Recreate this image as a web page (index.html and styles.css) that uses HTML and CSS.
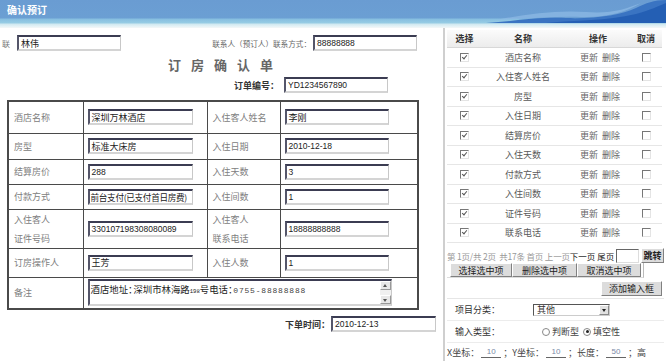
FILE: index.html
```html
<!DOCTYPE html>
<html lang="zh-CN">
<head>
<meta charset="utf-8">
<title>确认预订</title>
<link rel="stylesheet" href="styles.css">
</head>
<body>
<header class="topbar">
  <span class="topbar-title">确认预订</span>
  <svg class="waves" viewBox="0 0 180 23" preserveAspectRatio="none">
    <path d="M0 23 C30 21 50 17 80 18 C110 19 135 15 150 8 C160 3 168 0 180 0 L180 23 Z" fill="#3a74c2"/>
    <path d="M10 20 C40 14 70 10 100 12 C125 14 140 9 155 3 C140 12 120 18 95 17 C70 16 40 19 10 20 Z" fill="#8fbbe6" opacity="0.7"/>
    <path d="M60 23 C90 20 120 21 150 14 C165 10 172 6 180 3 L180 23 Z" fill="#245fb4"/>
  </svg>
</header>
<div class="main">
  <section class="form">
    <div class="contact">
      <span class="cut-lbl">联</span>
      <span class="field w104">林伟</span>
      <span class="contact-lbl">联系人（预订人）联系方式：</span>
      <span class="field w104 num">88888888</span>
    </div>
    <h1 class="doc-title">订房确认单</h1>
    <div class="orderno">
      <span class="blbl">订单编号：</span>
      <span class="field w104 num">YD1234567890</span>
    </div>
    <table class="grid">
      <colgroup><col class="c1"><col class="c2"><col class="c3"><col class="c4"></colgroup>
      <tr class="r1"><td class="lbl">酒店名称</td><td><span class="field w105">深圳万林酒店</span></td><td class="lbl">入住客人姓名</td><td><span class="field w104">李刚</span></td></tr>
      <tr class="r2"><td class="lbl">房型</td><td><span class="field w105">标准大床房</span></td><td class="lbl">入住日期</td><td><span class="field w104 num">2010-12-18</span></td></tr>
      <tr class="r3"><td class="lbl">结算房价</td><td><span class="field w105 num">288</span></td><td class="lbl">入住天数</td><td><span class="field w104 num">3</span></td></tr>
      <tr class="r4"><td class="lbl">付款方式</td><td><span class="field w105 tight">前台支付(已支付首日房费)</span></td><td class="lbl">入住间数</td><td><span class="field w104 num">1</span></td></tr>
      <tr class="r5"><td class="lbl two">入住客人<br>证件号码</td><td><span class="field w105 num">330107198308080089</span></td><td class="lbl two">入住客人<br>联系电话</td><td><span class="field w104 num">18888888888</span></td></tr>
      <tr class="r6"><td class="lbl">订房操作人</td><td><span class="field w105">王芳</span></td><td class="lbl">入住人数</td><td><span class="field w104 num">1</span></td></tr>
      <tr class="r7"><td class="lbl">备注</td><td colspan="3">
        <div class="memo">
          <span class="memo-text">酒店地址<span class="colon">：</span>深圳市林海路<span class="sm">198</span>号电话<span class="colon">：</span><span class="wd">0755-88888888</span></span>
          <span class="memo-bar"><span class="arr up"></span><span class="arr down"></span></span>
        </div>
      </td></tr>
    </table>
    <div class="ordertime">
      <span class="blbl">下单时间：</span>
      <span class="field w105 num">2010-12-13</span>
    </div>
  </section>
  <aside class="panel">
    <div class="ptable">
      <div class="prow phead"><span>选择</span><span>名称</span><span>操作</span><span>取消</span></div>
      <div class="prow"><span><i class="cb on"></i></span><span>酒店名称</span><span class="ops">更新 删除</span><span><i class="cb"></i></span></div>
      <div class="prow"><span><i class="cb on"></i></span><span>入住客人姓名</span><span class="ops">更新 删除</span><span><i class="cb"></i></span></div>
      <div class="prow"><span><i class="cb on"></i></span><span>房型</span><span class="ops">更新 删除</span><span><i class="cb"></i></span></div>
      <div class="prow"><span><i class="cb on"></i></span><span>入住日期</span><span class="ops">更新 删除</span><span><i class="cb"></i></span></div>
      <div class="prow"><span><i class="cb on"></i></span><span>结算房价</span><span class="ops">更新 删除</span><span><i class="cb"></i></span></div>
      <div class="prow"><span><i class="cb on"></i></span><span>入住天数</span><span class="ops">更新 删除</span><span><i class="cb"></i></span></div>
      <div class="prow"><span><i class="cb on"></i></span><span>付款方式</span><span class="ops">更新 删除</span><span><i class="cb"></i></span></div>
      <div class="prow"><span><i class="cb on"></i></span><span>入住间数</span><span class="ops">更新 删除</span><span><i class="cb"></i></span></div>
      <div class="prow"><span><i class="cb on"></i></span><span>证件号码</span><span class="ops">更新 删除</span><span><i class="cb"></i></span></div>
      <div class="prow"><span><i class="cb on"></i></span><span>联系电话</span><span class="ops">更新 删除</span><span><i class="cb"></i></span></div>
    </div>
    <div class="pager">
      <span class="pg-info">第 1页/共 2页 &nbsp;共17条 首页 上一页</span><span class="pg-link">下一页 尾页</span>
      <span class="pg-input"></span>
      <span class="btn pg-go">跳转</span>
    </div>
    <div class="btnrow">
      <span class="btn b1">选择选中项</span><span class="btn b2">删除选中项</span><span class="btn b3">取消选中项</span>
    </div>
    <div class="addrow"><span class="btn add">添加输入框</span></div>
    <div class="opt">
      <span class="opt-lbl">项目分类：</span>
      <span class="select"><span class="sel-text">其他</span><span class="sel-arrow"></span></span>
    </div>
    <div class="opt">
      <span class="opt-lbl">输入类型：</span>
      <span class="radios"><i class="rd"></i><span>判断型</span><i class="rd on"></i><span>填空性</span></span>
    </div>
    <div class="coords">
      <span>X坐标：</span><span class="uline">10</span><span>；Y坐标：</span><span class="uline">10</span><span>；长度：</span><span class="uline">50</span><span>；高</span>
    </div>
  </aside>
</div>
</body>
</html>
```
FILE: styles.css
```css
* { box-sizing: border-box; margin: 0; padding: 0; }
body {
  width: 666px; height: 361px; overflow: hidden; background: #fff;
  font-family: "Noto Sans CJK SC", "Liberation Sans", sans-serif;
  font-size: 9px; color: #333;
}
.topbar {
  height: 28px; display: flex; align-items: flex-start;
  background: linear-gradient(to bottom, #6a9cd2 0, #6b9fd3 18px, #86bee0 19px, #97cce4 23px, #cfe8f0 24px, #eaf5f8 27px, #f6f6f6 28px);
}
.topbar-title { color: #fff; font-weight: bold; font-size: 10px; line-height: 12px; padding: 4px 0 0 7px; }
.waves { margin-left: auto; width: 180px; height: 23px; display: block; }
.main { display: flex; height: 333px; }
.form { width: 445px; border-right: 2px solid #cfcfcf; padding-top: 7px; }
.field {
  display: inline-flex; align-items: center; height: 16px; background: #fff;
  border-top: 2px solid #3b3c52; border-left: 2px solid #55566a;
  border-right: 1px solid #c8c8c8; border-bottom: 2px solid #d4d4d4;
  padding-left: 2px; font-size: 9px; color: #222; white-space: nowrap; overflow: hidden;
}
.field.num { font-family: "Liberation Sans", sans-serif; font-size: 8.5px; }
.field.tight { font-size: 8.6px; letter-spacing: -0.3px; padding-left: 1px; }
.w104 { width: 104px; }
.w105 { width: 105px; }
.contact { display: flex; align-items: center; padding: 0 26px 0 2px; height: 16px; }
.cut-lbl { width: 15px; color: #777; font-size: 8px; }
.contact-lbl { margin-left: auto; margin-right: 2px; color: #666; font-size: 7.6px; }
.doc-title {
  margin-top: 6px; text-align: center; font-size: 13px; line-height: 16px;
  letter-spacing: 10px; padding-left: 8px; color: #666; font-weight: bold;
}
.orderno { display: flex; align-items: center; margin-top: 4px; padding-left: 234px; height: 16px; }
.blbl { font-weight: bold; color: #333; width: 50px; }
.grid {
  margin: 7px 0 0 7px; width: 410px; border-collapse: collapse; table-layout: fixed;
  border: 2px solid #4a4a4a;
}
.grid td { border: 1px solid #4a4a4a; padding: 0 0 0 4px; vertical-align: middle; }
.grid td.lbl { color: #808080; padding-left: 5px; }
.grid td.two { line-height: 19px; }
.c1 { width: 75px; } .c2 { width: 124px; } .c3 { width: 73px; } .c4 { width: 138px; }
.r1 { height: 32px; } .r2 { height: 26px; } .r3 { height: 25px; } .r4 { height: 25px; }
.r5 { height: 31px; } .r6 { height: 29px; } .r7 { height: 32px; }
.memo {
  width: 304px; height: 27px; display: flex; background: #fff;
  border-top: 2px solid #3b3c52; border-left: 2px solid #55566a;
  border-right: 1px solid #c8c8c8; border-bottom: 2px solid #d4d4d4;
}
.memo-text { flex: 1; padding: 1px 0 0 1px; font-size: 9.4px; color: #222; white-space: nowrap; overflow: hidden; }
.memo-text .colon { letter-spacing: -5px; margin-right: 1px; }
.memo-text .sm { font-family: "Liberation Mono", monospace; font-size: 5.6px; }
.memo-text .wd { font-family: "Liberation Mono", monospace; font-size: 8px; letter-spacing: 0.8px; color: #444; }
.memo-bar { width: 11px; display: flex; flex-direction: column; justify-content: space-between; background: #f0f0f0; }
.arr { height: 9px; background: #e8e8e8; border: 1px solid; border-color: #fff #999 #999 #fff; position: relative; }
.arr::after { content: ""; position: absolute; left: 2px; border-left: 2px solid transparent; border-right: 2px solid transparent; }
.arr.up::after { top: 2px; border-bottom: 3px solid #555; }
.arr.down::after { top: 3px; border-top: 3px solid #555; }
.ordertime { display: flex; align-items: center; justify-content: flex-end; margin-top: 6px; padding-right: 7px; height: 16px; }
.ordertime .blbl { width: auto; margin-right: 1px; }

.panel { width: 219px; padding: 2px 0 0 2px; }
.ptable { width: 215px; }
.prow { display: grid; grid-template-columns: 35px 82px 68px 28px; height: 19.5px; align-items: center; text-align: center; border-bottom: 1px solid #e6e6e6; color: #5a5a5a; }
.prow > span { display: flex; justify-content: center; align-items: center; }
.phead { height: 18px; font-weight: bold; color: #333; background: linear-gradient(#fbfbfb, #ececec); border-bottom: 1px solid #d8d8d8; }
.ops { color: #666; word-spacing: 2px; padding-left: 4px; }
.cb { display: inline-block; width: 9px; height: 9px; background: #fff; border-top: 1px solid #777; border-left: 1px solid #777; border-right: 1px solid #e4e4e4; border-bottom: 1px solid #e4e4e4; position: relative; }
.cb.on::after { content: ""; position: absolute; left: 2px; top: 0px; width: 2px; height: 4px; border-right: 1.5px solid #555; border-bottom: 1.5px solid #555; transform: rotate(40deg); }
.pager { display: flex; align-items: center; height: 15px; margin-top: 5px; font-size: 8.5px; color: #999; white-space: nowrap; }
.pg-info { letter-spacing: -0.2px; }
.pg-link { color: #222; }
.pg-input { width: 23px; height: 14px; margin-left: 2px; border: 1px solid; border-color: #666 #ddd #ddd #666; background: #fff; }
.btn { display: inline-flex; align-items: center; justify-content: center; background: #dcdcdc; border: 1px solid; border-color: #fff #808080 #808080 #fff; color: #222; font-size: 9px; height: 14px; white-space: nowrap; }
.pg-go { width: 23px; height: 15px; margin-left: 2px; font-weight: bold; }
.btnrow { display: flex; height: 15px; width: 197px; border-right: 1px solid #bbb; border-bottom: 1px solid #ddd; }
.b1 { width: 62px; margin-left: 3px; } .b2 { width: 65px; } .b3 { width: 64px; }
.addrow { display: flex; justify-content: flex-end; padding: 3px 2px 0 0; height: 21px; border-bottom: 1px solid #e6e6e6; }
.add { width: 61px; height: 15px; }
.opt { display: flex; align-items: center; height: 22px; border-bottom: 1px solid #ececec; }
.opt-lbl { width: 86px; padding-left: 8px; color: #333; }
.select { width: 77px; height: 12px; display: flex; align-items: center; border: 1px solid; border-color: #555 #ccc #ccc #555; background: #fff; }
.sel-text { flex: 1; padding-left: 3px; }
.sel-arrow { width: 10px; height: 10px; background: #e0e0e0; border: 1px solid; border-color: #fff #888 #888 #fff; position: relative; }
.sel-arrow::after { content: ""; position: absolute; left: 2px; top: 3px; border-left: 2px solid transparent; border-right: 2px solid transparent; border-top: 3px solid #222; }
.radios { display: flex; align-items: center; margin-left: 7px; color: #444; gap: 2px; }
.rd { display: inline-block; width: 8px; height: 8px; border-radius: 50%; border: 1px solid #888; background: #fff; position: relative; margin-left: 2px; }
.rd.on::after { content: ""; position: absolute; left: 1.5px; top: 1.5px; width: 3px; height: 3px; border-radius: 50%; background: #222; }
.coords { display: flex; align-items: center; height: 18px; color: #444; white-space: nowrap; }
.uline { display: inline-block; width: 20px; text-align: center; border-bottom: 1px solid #666; color: #7a8aa8; font-family: "Liberation Sans", sans-serif; font-size: 8px; line-height: 10px; margin: 0 2px; }
```
